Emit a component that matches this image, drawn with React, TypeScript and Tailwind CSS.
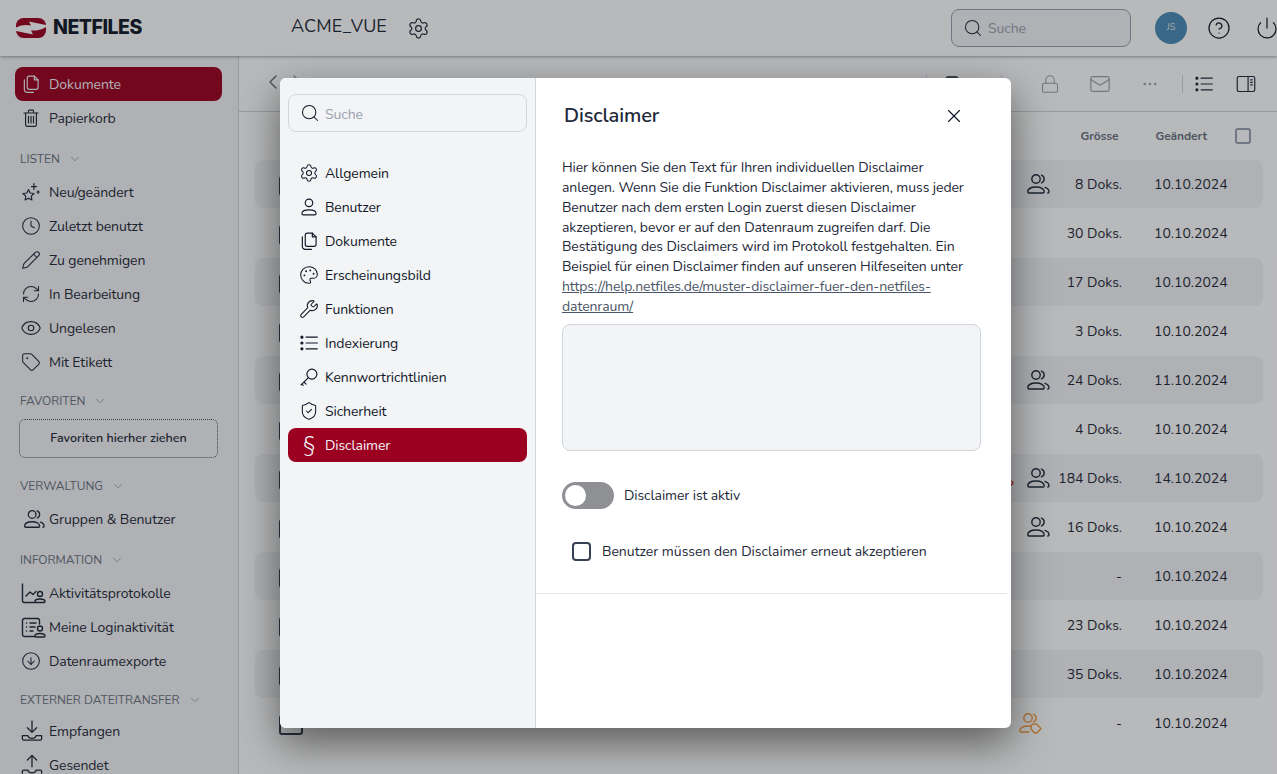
import type { ReactNode } from 'react';
import {
  ChevronDown,
  ChevronLeft,
  ChevronRight,
  CircleArrowDown,
  CircleHelp,
  Clock,
  Ellipsis,
  Eye,
  Lock,
  Mail,
  Palette,
  Pencil,
  Power,
  RefreshCw,
  Search,
  Settings,
  ShieldCheck,
  Tag,
  Wrench,
  X,
} from 'lucide-react';

function Ico({ children, className = 'w-5 h-5' }: { children: ReactNode; className?: string }) {
  return (
    <svg
      viewBox="0 0 24 24"
      fill="none"
      stroke="currentColor"
      strokeWidth={1.4}
      strokeLinecap="round"
      strokeLinejoin="round"
      className={`shrink-0 overflow-visible ${className}`}
    >
      {children}
    </svg>
  );
}

const DocsIcon = () => (
  <Ico>
    <path d="M10 2.5h6l4.5 4.5v9a2.5 2.5 0 0 1-2.5 2.5h-8a2.5 2.5 0 0 1-2.5-2.5V5a2.5 2.5 0 0 1 2.5-2.5z" />
    <path d="M16 2.5V7h4.5" />
    <path d="M4 7v11.5a3.5 3.5 0 0 0 3.5 3.5H15" />
  </Ico>
);

const TrashIcon = () => (
  <Ico>
    <path d="M3.5 6h17M9 6V3.5a1 1 0 0 1 1-1h4a1 1 0 0 1 1 1V6" />
    <path d="M5.5 6v14a2 2 0 0 0 2 2h9a2 2 0 0 0 2-2V6" />
    <path d="M9 10v8M12 10v8M15 10v8" />
  </Ico>
);

const StarsIcon = () => (
  <Ico>
    <path d="M9 9l2 4.2 4.6.6-3.3 3.2.8 4.6L9 19.4l-4.1 2.2.8-4.6-3.3-3.2 4.6-.6z" />
    <path d="M15.5 2v7M12.5 5.5h6M20.5 10.5v3M19 12h3" />
  </Ico>
);

const UserIcon = () => (
  <Ico>
    <circle cx="12" cy="7" r="4.5" />
    <path d="M5 21.5h14c1 0 1.5-.6 1.5-1.4 0-2.8-3.4-4.6-8.5-4.6s-8.500 1.800-8.500 4.600c0 .8.5 1.400 1.500 1.400z" />
  </Ico>
);

const UsersIcon = ({ className = 'w-6 h-6' }: { className?: string }) => (
  <Ico className={className}>
    <circle cx="10" cy="7" r="4.2" />
    <path d="M3 21h14c.8 0 1.2-.5 1.2-1.2 0-2.8-3.2-4.8-8.2-4.8s-8.2 2-8.2 4.8c0 .7.4 1.2 1.2 1.2z" />
    <path d="M15.5 3.1a4.2 4.2 0 0 1 0 7.8M19 15.4c2.4.8 4 2.3 4 4.4 0 .7-.4 1.2-1.2 1.2" />
  </Ico>
);

const SharedUsersIcon = () => (
  <Ico className="w-6 h-6">
    <circle cx="10" cy="7" r="4.2" />
    <path d="M11 21H3c-.8 0-1.2-.5-1.2-1.2 0-2.8 3.2-4.8 8.2-4.8 1.200 0 2.300.1 3.300.4" />
    <path d="M15.500 3.100a4.200 4.200 0 0 1 0 7.800" />
    <path d="M15 13h3.500l4.500 4.500-4 4.500h-2.500L13 18v-3.500z" />
  </Ico>
);

const ActivityIcon = () => (
  <Ico className="w-[24px] h-[24px] -mr-[4px]">
    <path d="M1.500 3v17a1.500 1.500 0 0 0 1.500 1.500h11" />
    <path d="M5 15l4-4 3 2.500 3-3" />
    <circle cx="19" cy="13" r="2.500" />
    <path d="M15 21.500h8c.6 0 1-.4 1-1 0-1.600-2-2.500-5-2.500s-5 .9-5 2.500c0 .6.4 1 1 1z" />
  </Ico>
);

const LoginIcon = () => (
  <Ico className="w-[24px] h-[24px] -mr-[4px]">
    <path d="M14 21.500H3.500a2 2 0 0 1-2-2v-14a2 2 0 0 1 2-2h13a2 2 0 0 1 2 2V9" />
    <path d="M5.500 8h.1M5.500 12h.1M5.500 16h.1M9 8h6M9 12h5M9 16h3" />
    <circle cx="19" cy="13.500" r="2.500" />
    <path d="M15 22h8c.6 0 1-.4 1-1 0-1.600-2-2.500-5-2.500s-5 .9-5 2.500c0 .6.4 1 1 1z" />
  </Ico>
);

const InboxDownIcon = () => (
  <Ico className="w-[22px] h-[22px] -mr-[2px]">
    <path d="M12 1v12M7 8.500l5 5 5-5" />
    <path d="M1.500 17h6c.5 2 2.500 3 4.500 3s4-1 4.500-3h6M1.500 17v3.500a1.500 1.500 0 0 0 1.500 1.500h18a1.500 1.500 0 0 0 1.500-1.500V17" />
  </Ico>
);

const InboxUpIcon = () => (
  <Ico className="w-[22px] h-[22px] -mr-[2px]">
    <path d="M12 14V2M7 6.500l5-5 5 5" />
    <path d="M1.500 21v-2a1.500 1.500 0 0 1 1.500-1.500h4.500c.5 2 2.500 3 4.500 3s4-1 4.500-3H21a1.500 1.500 0 0 1 1.500 1.500v2" />
  </Ico>
);

const ListIcon = ({ className = 'w-5 h-5' }: { className?: string }) => (
  <Ico className={className}>
    <circle cx="3.500" cy="5" r="1.200" fill="currentColor" />
    <circle cx="3.500" cy="12" r="1.200" fill="currentColor" />
    <circle cx="3.500" cy="19" r="1.200" fill="currentColor" />
    <path d="M8.500 5H22M8.500 12H22M8.500 19H22" />
  </Ico>
);

const KeyIcon = () => (
  <Ico>
    <circle cx="15.500" cy="8.500" r="6" />
    <path d="M11 13L2.500 21.500M6 18l2.500 2.500M3.500 20.500l1.500 1.500" />
  </Ico>
);

const PanelIcon = () => (
  <Ico className="w-[20px] h-[20px]">
    <rect x="1.500" y="3" width="21" height="18" rx="2" />
    <path d="M14.500 3v18M17.500 7h2M17.500 10h2M17.500 13h2" />
  </Ico>
);

const Logo = () => (
  <svg viewBox="0 0 30 20" className="w-[30px] h-[20px] shrink-0">
    <rect width="30" height="20" rx="7.500" fill="#9b0020" />
    <path
      d="M0 9.500C5 6.500 11 6.500 15 7.500L13 3.500L30 7V9C25 12 20 13 15 12.500L17 16.500L0 13z"
      fill="#fff"
    />
  </svg>
);

const lucideProps = { size: 20, strokeWidth: 1.25, className: 'shrink-0' };

function SideItem({ icon, label, active }: { icon: ReactNode; label: string; active?: boolean }) {
  return (
    <div
      className={`flex items-center gap-2 h-[34px] pl-[6px] rounded-lg text-[14px] ${
        active ? 'bg-[#9b0020] text-gray-100' : 'text-gray-800'
      }`}
    >
      {icon}
      <span>{label}</span>
    </div>
  );
}

function SideHeader({ label, className }: { label: string; className: string }) {
  return (
    <div className={`flex items-center gap-2 h-4 pl-[5px] text-[12px] tracking-normal text-gray-500 ${className}`}>
      <span>{label}</span>
      <ChevronDown size={14} strokeWidth={1} className="text-gray-500" />
    </div>
  );
}

function Sidebar() {
  return (
    <aside className="w-[239px] shrink-0 border-r border-gray-300 bg-gray-100 pl-[15px] pr-4 pt-[11px]">
      <SideItem active icon={<DocsIcon />} label="Dokumente" />
      <SideItem icon={<TrashIcon />} label="Papierkorb" />
      <SideHeader label="LISTEN" className="mt-4 mb-2" />
      <SideItem icon={<StarsIcon />} label="Neu/geändert" />
      <SideItem icon={<Clock {...lucideProps} />} label="Zuletzt benutzt" />
      <SideItem icon={<Pencil {...lucideProps} />} label="Zu genehmigen" />
      <SideItem icon={<RefreshCw {...lucideProps} />} label="In Bearbeitung" />
      <SideItem icon={<Eye size={22} strokeWidth={1.25} className="-mx-px shrink-0" />} label="Ungelesen" />
      <SideItem icon={<Tag {...lucideProps} />} label="Mit Etikett" />
      <SideHeader label="FAVORITEN" className="mt-[14px] mb-[10px]" />
      <div className="ml-1 mr-1 flex h-[39px] items-center justify-center rounded-md border border-dotted border-gray-600 text-[12.5px] font-semibold tracking-normal text-gray-800">
        Favoriten hierher ziehen
      </div>
      <SideHeader label="VERWALTUNG" className="mt-5 mb-2" />
      <SideItem icon={<UsersIcon className="w-[22px] h-[22px] ml-[2px] -mr-[4px]" />} label="Gruppen & Benutzer" />
      <SideHeader label="INFORMATION" className="mt-4 mb-2" />
      <SideItem icon={<ActivityIcon />} label="Aktivitätsprotokolle" />
      <SideItem icon={<LoginIcon />} label="Meine Loginaktivität" />
      <SideItem icon={<CircleArrowDown {...lucideProps} />} label="Datenraumexporte" />
      <SideHeader label="EXTERNER DATEITRANSFER" className="mt-[14px] mb-[6px]" />
      <SideItem icon={<InboxDownIcon />} label="Empfangen" />
      <SideItem icon={<InboxUpIcon />} label="Gesendet" />
    </aside>
  );
}

function Header() {
  return (
    <header className="relative z-10 flex h-[56px] shrink-0 items-center bg-white pl-4 shadow-[0_1px_3px_rgba(0,0,0,0.35)]">
      <Logo />
      <span className="ml-[7px] w-[238px] font-['Inter',sans-serif] text-[19.500px] font-extrabold tracking-[-0.5px] text-gray-900">
        NETFILES
      </span>
      <span className="-mt-1 text-[18px] tracking-[0.1px] text-gray-800">ACME_VUE</span>
      <Settings size={23} strokeWidth={1.25} className="ml-5 text-gray-800" />
      <div className="ml-auto flex h-[38px] w-[180px] items-center gap-[5px] rounded-lg border border-gray-400 bg-gray-100 px-[11px]">
        <Search size={20} strokeWidth={1.25} className="text-gray-800" />
        <span className="mt-px text-[14px] text-gray-400">Suche</span>
      </div>
      <div className="ml-6 flex h-8 w-8 items-center justify-center rounded-full bg-[#4a8cb8] text-[9px] text-gray-200">
        JS
      </div>
      <CircleHelp size={24} strokeWidth={1.25} className="ml-5 text-gray-900" />
      <Power size={24} strokeWidth={1.25} className="ml-6 mr-[-2px] text-gray-900" />
    </header>
  );
}

function Toolbar() {
  return (
    <div className="flex h-[56px] shrink-0 items-center border-b border-gray-300 pl-[22px] pr-[21px] text-gray-400">
      <ChevronLeft size={24} strokeWidth={1.5} className="-mt-1 text-gray-500" />
      <ChevronRight size={24} strokeWidth={1.5} className="-mt-1" />
      <span className="ml-3 text-[14px]">Dokumente</span>
      <div className="ml-auto flex items-center">
        <div className="mr-[18px] h-[18px] w-px bg-gray-300" />
        <div className="mr-[42px] h-[16px] w-[14px] rounded-sm border-2 border-gray-600" />
        <div className="mr-[38px] h-[18px] w-px bg-gray-300" />
        <Lock size={20} strokeWidth={1.25} />
        <Mail size={22} strokeWidth={1.25} className="ml-[29px]" />
        <Ellipsis size={18} strokeWidth={1.5} className="ml-[30px]" />
        <div className="ml-[23px] h-[18px] w-px bg-gray-300" />
        <ListIcon className="ml-[11px] h-5 w-5 text-gray-800" />
        <div className="ml-[22px] text-gray-800">
          <PanelIcon />
        </div>
      </div>
    </div>
  );
}

type RowData = { size: string; date: string; users?: boolean; red?: boolean; shared?: boolean };

const rows: RowData[] = [
  { size: '8 Doks.', date: '10.10.2024', users: true },
  { size: '30 Doks.', date: '10.10.2024' },
  { size: '17 Doks.', date: '10.10.2024' },
  { size: '3 Doks.', date: '10.10.2024' },
  { size: '24 Doks.', date: '11.10.2024', users: true },
  { size: '4 Doks.', date: '10.10.2024' },
  { size: '184 Doks.', date: '14.10.2024', users: true, red: true },
  { size: '16 Doks.', date: '10.10.2024', users: true },
  { size: '-', date: '10.10.2024' },
  { size: '23 Doks.', date: '10.10.2024' },
  { size: '35 Doks.', date: '10.10.2024' },
  { size: '-', date: '10.10.2024', shared: true },
];

function Row({ row, striped }: { row: RowData; striped: boolean }) {
  return (
    <div className={`mb-px flex h-[48px] items-center rounded-lg pl-6 pr-9 text-[14px] tracking-normal text-gray-800 ${striped ? 'bg-gray-100' : ''}`}>
      <div className="mt-1 h-[20px] w-[24px] rounded-[3px] border-2 border-gray-700" />
      <div className="ml-auto flex w-[28px] justify-center text-[#dc2626]">
        {row.red && <ChevronRight size={18} strokeWidth={1.5} className="mt-[10px]" />}
      </div>
      <div className="flex w-[26px] justify-center">
        {row.users && <UsersIcon />}
        {row.shared && (
          <div className="-ml-[16px] text-[#f59e42]">
            <SharedUsersIcon />
          </div>
        )}
      </div>
      <div className="w-[71px] text-right">{row.size}</div>
      <div className="ml-8 w-[73px]">{row.date}</div>
    </div>
  );
}

function FileList() {
  return (
    <main className="flex min-w-0 flex-1 flex-col bg-white">
      <Toolbar />
      <div className="flex h-[48px] shrink-0 items-center justify-end pr-[26px] text-[12px] font-bold text-gray-500">
        <span>Grösse</span>
        <span className="ml-[37px]">Geändert</span>
        <div className="ml-7 h-4 w-4 rounded-[3px] border-2 border-gray-400" />
      </div>
      <div className="pl-4 pr-[14px]">
        {rows.map((row, i) => (
          <Row key={i} row={row} striped={i % 2 === 0} />
        ))}
      </div>
    </main>
  );
}

const navItems: { label: string; icon: ReactNode }[] = [
  { label: 'Allgemein', icon: <Settings {...lucideProps} /> },
  { label: 'Benutzer', icon: <UserIcon /> },
  { label: 'Dokumente', icon: <DocsIcon /> },
  { label: 'Erscheinungsbild', icon: <Palette {...lucideProps} /> },
  { label: 'Funktionen', icon: <Wrench {...lucideProps} /> },
  { label: 'Indexierung', icon: <ListIcon /> },
  { label: 'Kennwortrichtlinien', icon: <KeyIcon /> },
  { label: 'Sicherheit', icon: <ShieldCheck {...lucideProps} /> },
];

function SettingsModal() {
  return (
    <div className="absolute left-[280px] top-[78px] flex h-[650px] w-[731px] overflow-hidden rounded-md bg-white shadow-[0_15px_40px_rgba(0,0,0,0.5)]">
      <nav className="w-[256px] shrink-0 border-r border-gray-300 bg-gray-100 px-2 pt-4">
        <div className="flex h-[38px] items-center gap-[5px] rounded-lg border border-gray-300 px-[11px]">
          <Search size={20} strokeWidth={1.25} className="text-gray-900" />
          <span className="mt-[2px] text-[14px] text-gray-400">Suche</span>
        </div>
        <div className="mt-6">
          {navItems.map((item) => (
            <div key={item.label} className="flex h-[34px] items-center gap-[6px] pl-[11px] text-[14px] text-gray-900">
              {item.icon}
              <span>{item.label}</span>
            </div>
          ))}
          <div className="flex h-[34px] items-center gap-[6px] rounded-lg bg-[#9b0020] pl-[11px] text-[14px] text-gray-100">
            <span className="w-5 text-center text-[22px] font-light leading-none">§</span>
            <span>Disclaimer</span>
          </div>
        </div>
      </nav>
      <section className="min-w-0 flex-1 pr-1">
        <div className="flex h-[75px] items-center pl-7 pr-[42px] pt-[1px]">
          <h2 className="text-[20px] font-semibold text-gray-800">Disclaimer</h2>
          <X size={22} strokeWidth={1.25} className="ml-auto text-gray-900" />
        </div>
        <div className="border-b border-gray-200 pb-[31px] pl-[26px] pr-[26px]">
          <p className="mt-[5px] text-[14px] leading-[19.85px] text-gray-800">
            Hier können Sie den Text für Ihren individuellen Disclaimer
            <br />
            anlegen. Wenn Sie die Funktion Disclaimer aktivieren, muss jeder
            <br />
            Benutzer nach dem ersten Login zuerst diesen Disclaimer
            <br />
            akzeptieren, bevor er auf den Datenraum zugreifen darf. Die
            <br />
            Bestätigung des Disclaimers wird im Protokoll festgehalten. Ein
            <br />
            Beispiel für einen Disclaimer finden auf unseren Hilfeseiten unter
            <br />
            <span className="text-gray-600 underline">
              https://help.netfiles.de/muster-disclaimer-fuer-den-netfiles-
              <br />
              datenraum/
            </span>
          </p>
          <div className="mt-[7px] h-[127px] w-[419px] rounded-lg border border-gray-300 bg-gray-100" />
          <div className="mt-[31px] flex h-[27px] items-center gap-[10px]">
            <div className="flex h-[27px] w-[52px] items-center rounded-full bg-[#8e9094] pl-[3px]">
              <div className="h-[21px] w-[21px] rounded-full bg-white" />
            </div>
            <span className="text-[14px] text-gray-800">Disclaimer ist aktiv</span>
          </div>
          <div className="mt-[32px] flex items-center gap-[11px] pl-[10px]">
            <div className="h-[19px] w-[19px] rounded-[4px] border-2 border-gray-700" />
            <span className="text-[14px] tracking-[-0.02px] text-gray-800">
              Benutzer müssen den Disclaimer erneut akzeptieren
            </span>
          </div>
        </div>
      </section>
    </div>
  );
}

export default function App() {
  return (
    <div className="relative flex h-screen w-full flex-col overflow-hidden bg-white font-['Nunito','Lato','Noto_Sans',sans-serif] tracking-[-0.09px]">
      <Header />
      <div className="flex min-h-0 flex-1">
        <Sidebar />
        <FileList />
      </div>
      <div className="absolute inset-0 z-20 bg-[#14161c]/30" />
      <div className="absolute inset-0 z-30">
        <SettingsModal />
      </div>
    </div>
  );
}
